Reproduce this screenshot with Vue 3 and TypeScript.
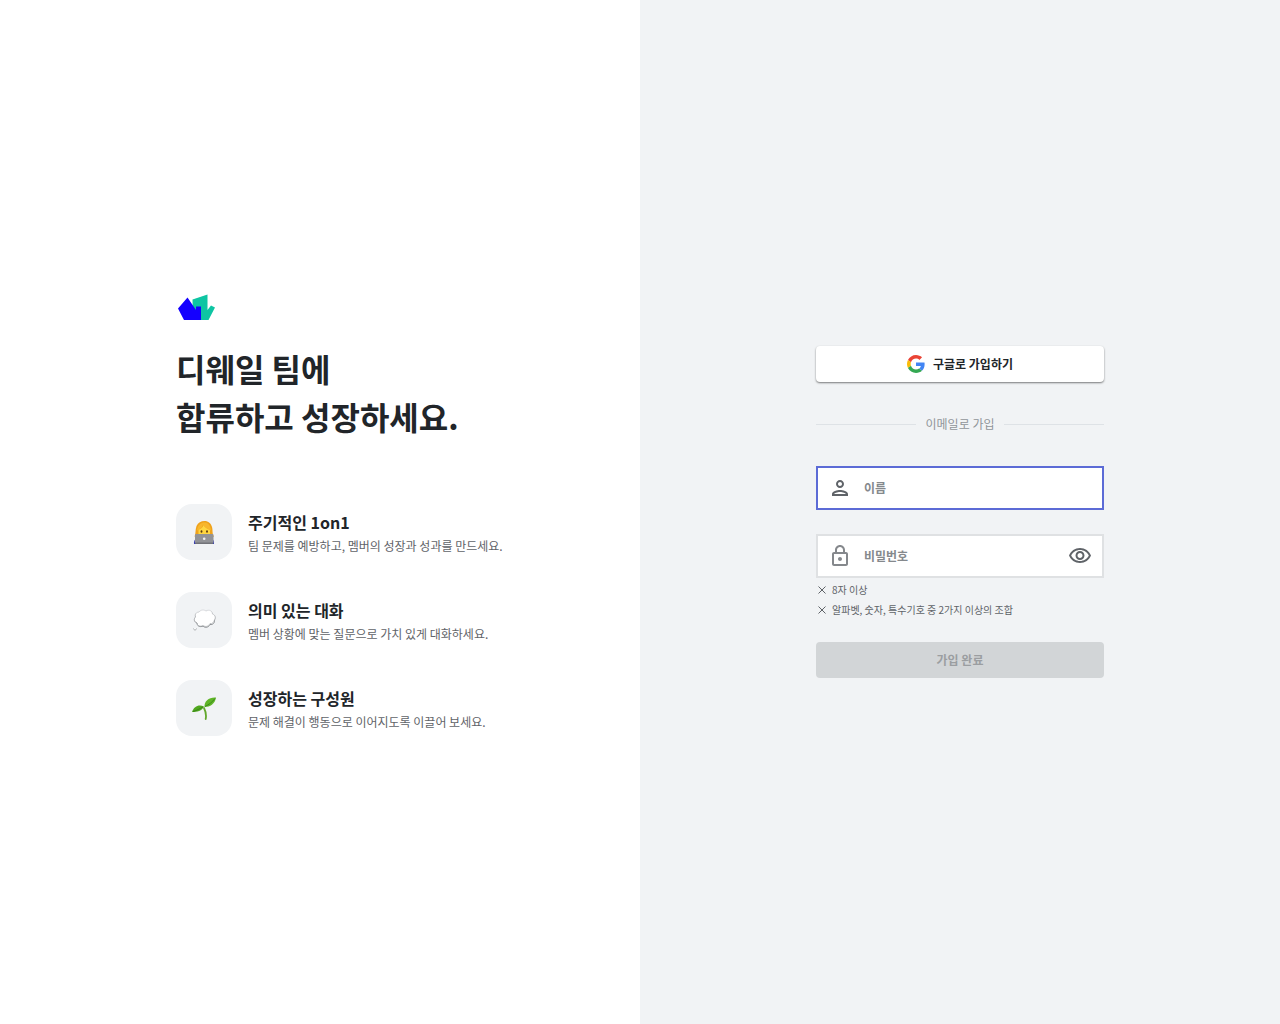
<script setup lang="ts">
import { ref } from 'vue'

interface Feature {
  icon: 'person' | 'thought' | 'sprout'
  title: string
  description: string
}

const features: Feature[] = [
  { icon: 'person', title: '주기적인 1on1', description: '팀 문제를 예방하고, 멤버의 성장과 성과를 만드세요.' },
  { icon: 'thought', title: '의미 있는 대화', description: '멤버 상황에 맞는 질문으로 가치 있게 대화하세요.' },
  { icon: 'sprout', title: '성장하는 구성원', description: '문제 해결이 행동으로 이어지도록 이끌어 보세요.' },
]

const rules: string[] = ['8자 이상', '알파벳, 숫자, 특수기호 중 2가지 이상의 조합']

const name = ref('')
const password = ref('')
const showPassword = ref(false)
</script>

<template>
  <main class="page">
    <section class="intro">
      <div class="column">
        <svg class="logo" viewBox="0 0 40 40" aria-hidden="true">
          <path d="M16.500 11.500 31.500 6.500V22L35 17.500 39 19.500 32.500 32H17Z" fill="#0ec5a3" />
          <path d="M11.500 9.500 20 22V18.500H25V32H8L2 20.500Z" fill="#1400ff" />
        </svg>
        <h1>디웨일 팀에<br />합류하고 성장하세요.</h1>
        <ul class="features">
          <li v-for="feature in features" :key="feature.title">
            <span class="tile">
              <svg v-if="feature.icon === 'person'" viewBox="0 0 24 24" aria-hidden="true">
                <path d="M2 24c-.5-4 2-6 5-6h10c3 0 5.500 2 5 6Z" fill="#3b3fae" />
                <path d="M2.500 16.500C4 14 3 10 4.500 6 6 2.500 9 1 12.500 1c4 0 6.500 2.500 7.500 6 1 3.500 0 7 2 9.500-4 2-15 2-19.500 0Z" fill="#efa21b" />
                <path d="M6.500 9.500C9.500 9 11 7 11.500 5c1.500 2.500 4 4 6.500 4.500V14c-1 3-10.500 3-11.500 0Z" fill="#ffd640" />
                <path d="M5 10.500C8.500 9.500 10.500 7.500 11 4.500c2 3.500 4.500 4.500 8 6C18.500 5 16 2.500 12.500 2.500S5.500 5 5 10.500Z" fill="#f8b62c" />
                <ellipse cx="9.500" cy="11.500" rx=".9" ry="1.200" fill="#5b3c10" />
                <ellipse cx="15" cy="11.500" rx=".9" ry="1.200" fill="#5b3c10" />
                <rect x="3" y="14" width="18.500" height="9.500" rx="1" fill="#929397" />
                <path d="M3.500 22.500h17.500v1.500H3.500Z" fill="#727378" />
                <circle cx="12.200" cy="18.700" r="1.300" fill="#f1f1f2" />
              </svg>
              <svg v-else-if="feature.icon === 'thought'" viewBox="0 0 24 24" aria-hidden="true">
                <defs>
                  <linearGradient id="cloud-edge" x1="0" y1="0" x2="0" y2="1">
                    <stop offset="0" stop-color="#d8dadd" />
                    <stop offset="1" stop-color="#777a7e" />
                  </linearGradient>
                </defs>
                <path d="M7 4C9 1.500 12 1.500 14 3c3-2 6.500 0 6.500 3 3 1 3.500 4 2 6 .5 3-2 5-4.500 4.500-1.500 3-5 3.500-7 1.500-3 1.500-6 0-6-3-3-1-3.500-4-1.500-6C2.500 6 4.500 4 7 4Z" fill="#fff" stroke="url(#cloud-edge)" stroke-width="1" />
                <path d="M5 15.500c1 3 4 3 6 2 2.500 1.800 5.500 1 7-2 2 .5 4-1 4-3" fill="none" stroke="#b4b7ba" stroke-width=".8" />
                <path d="M1.500 20.500c.5 2 2.500 2 3 0" fill="#fff" stroke="#94979b" stroke-width=".8" />
              </svg>
              <svg v-else viewBox="0 0 24 24" aria-hidden="true">
                <path d="M12 12c2 4 2.500 7 1.700 11" fill="none" stroke="#62a82c" stroke-width="1.800" stroke-linecap="round" />
                <path d="M0 16C2 10 7 8 12 10.500 10 15 5 16 0 16Z" fill="#50a71e" />
                <path d="M12.500 11C12 5 17 1 24 1.500 23 8 18 11 12.500 11Z" fill="#5fb527" />
                <path d="M1 15.500c4-1 7-3 10-4.500m2-.5c4-2 7-4 10-8" fill="none" stroke="#347d18" stroke-width=".8" />
              </svg>
            </span>
            <div class="copy">
              <h2>{{ feature.title }}</h2>
              <p>{{ feature.description }}</p>
            </div>
          </li>
        </ul>
      </div>
    </section>

    <section class="signup">
      <form class="column" @submit.prevent>
        <button class="google" type="button">
          <svg viewBox="0 0 48 48" aria-hidden="true">
            <path fill="#ea4335" d="M24 9.500c3.540 0 6.710 1.220 9.210 3.600l6.850-6.850C35.900 2.380 30.470 0 24 0 14.620 0 6.510 5.380 2.560 13.220l7.980 6.190C12.430 13.720 17.740 9.500 24 9.500z" />
            <path fill="#4285f4" d="M46.980 24.550c0-1.570-.15-3.090-.38-4.550H24v9.020h12.940c-.58 2.960-2.260 5.480-4.780 7.180l7.730 6c4.510-4.180 7.090-10.360 7.090-17.650z" />
            <path fill="#fbbc05" d="M10.530 28.590c-.48-1.450-.76-2.990-.76-4.590s.27-3.140.76-4.590l-7.980-6.190C.92 16.460 0 20.120 0 24c0 3.880.92 7.540 2.560 10.780l7.970-6.190z" />
            <path fill="#34a853" d="M24 48c6.480 0 11.930-2.130 15.890-5.810l-7.730-6c-2.150 1.450-4.920 2.300-8.160 2.300-6.260 0-11.570-4.220-13.470-9.910l-7.980 6.190C6.510 42.620 14.620 48 24 48z" />
          </svg>
          <span>구글로 가입하기</span>
        </button>

        <div class="divider"><span>이메일로 가입</span></div>

        <div class="field active">
          <svg viewBox="0 0 24 24" aria-hidden="true">
            <path fill="#5f6368" d="M12 6c1.100 0 2 .9 2 2s-.9 2-2 2-2-.9-2-2 .9-2 2-2m0 10c2.700 0 5.800 1.290 6 2H6c.23-.72 3.310-2 6-2m0-12C9.790 4 8 5.790 8 8s1.790 4 4 4 4-1.790 4-4-1.790-4-4-4zm0 10c-2.670 0-8 1.340-8 4v2h16v-2c0-2.660-5.330-4-8-4z" />
          </svg>
          <input v-model="name" type="text" placeholder="이름" aria-label="이름" autocomplete="name" />
        </div>

        <div class="field">
          <svg viewBox="0 0 24 24" aria-hidden="true">
            <path fill="#85888c" d="M18 8h-1V6c0-2.760-2.240-5-5-5S7 3.240 7 6v2H6c-1.100 0-2 .9-2 2v10c0 1.100.9 2 2 2h12c1.100 0 2-.9 2-2V10c0-1.100-.9-2-2-2zM9 6c0-1.660 1.340-3 3-3s3 1.340 3 3v2H9V6zm9 14H6V10h12v10zm-6-3c1.100 0 2-.9 2-2s-.9-2-2-2-2 .9-2 2 .9 2 2 2z" />
          </svg>
          <input v-model="password" :type="showPassword ? 'text' : 'password'" placeholder="비밀번호" aria-label="비밀번호" autocomplete="new-password" />
          <button class="reveal" type="button" aria-label="비밀번호 표시" @click="showPassword = !showPassword">
            <svg viewBox="0 0 24 24" aria-hidden="true">
              <path fill="#5f6368" d="M12 6c3.790 0 7.170 2.130 8.820 5.500C19.170 14.870 15.790 17 12 17s-7.170-2.130-8.820-5.500C4.830 8.130 8.210 6 12 6m0-2C7 4 2.730 7.110 1 11.500 2.730 15.890 7 19 12 19s9.270-3.110 11-7.500C21.270 7.110 17 4 12 4zm0 5c1.380 0 2.500 1.120 2.500 2.500S13.380 14 12 14s-2.500-1.120-2.500-2.500S10.620 9 12 9m0-2c-2.480 0-4.500 2.020-4.500 4.500S9.520 16 12 16s4.500-2.020 4.500-4.500S14.480 7 12 7z" />
            </svg>
          </button>
        </div>

        <ul class="rules">
          <li v-for="rule in rules" :key="rule">
            <svg viewBox="0 0 12 12" aria-hidden="true"><path d="m2.500 2.500 7 7m0-7-7 7" fill="none" stroke="#5f6368" stroke-width="1" /></svg>
            <span>{{ rule }}</span>
          </li>
        </ul>

        <button class="submit" type="submit" disabled>가입 완료</button>
      </form>
    </section>
  </main>
</template>

<style>
body {
  margin: 0;
  background: #f1f3f5;
}
</style>

<style scoped>
.page {
  display: flex;
  min-height: 100vh;
  color: #212529;
  font-family: "Noto Sans CJK KR", sans-serif;
  font-size: 12px;
  line-height: 20px;
}
.page * {
  box-sizing: border-box;
}
.intro,
.signup {
  flex: 1;
  display: flex;
  align-items: center;
  justify-content: center;
}
.intro {
  background: #fff;
}
.signup {
  background: #f1f3f5;
}
.column {
  width: 288px;
}
.logo {
  display: block;
  width: 40px;
  height: 40px;
}
h1 {
  margin: 16px 0 64px;
  font-size: 32px;
  line-height: 48px;
  font-weight: 700;
  white-space: nowrap;
}
h2,
p,
ul {
  margin: 0;
  padding: 0;
}
li {
  list-style: none;
}
.features {
  display: flex;
  flex-direction: column;
  gap: 32px;
}
.features li {
  display: flex;
  align-items: center;
  gap: 16px;
}
.tile {
  flex: none;
  display: flex;
  align-items: center;
  justify-content: center;
  width: 56px;
  height: 56px;
  border-radius: 16px;
  background: #f1f3f5;
}
.tile svg {
  width: 24px;
  height: 24px;
}
.copy {
  white-space: nowrap;
}
h2 {
  font-size: 16px;
  line-height: 28px;
  font-weight: 700;
}
p {
  color: #5f6368;
}
button {
  padding: 0;
  border: 0;
  font: inherit;
}
.google,
.submit {
  display: flex;
  align-items: center;
  justify-content: center;
  width: 100%;
  height: 36px;
  border-radius: 4px;
  font-weight: 700;
}
.google {
  gap: 8px;
  background: #fff;
  color: #212529;
  box-shadow: 0 1px 2px rgba(0, 0, 0, 0.5);
}
.google svg {
  width: 18px;
  height: 18px;
}
.divider {
  display: flex;
  align-items: center;
  gap: 10px;
  margin: 32px 0;
  color: #909599;
}
.divider::before,
.divider::after {
  content: "";
  flex: 1;
  height: 1px;
  background: #dee2e6;
}
.field {
  display: flex;
  align-items: center;
  height: 44px;
  padding: 0 10px;
  border: 2px solid #dfe1e3;
  background: #fff;
}
.field.active {
  margin-bottom: 24px;
  border-color: #5c6bd6;
}
.field svg {
  flex: none;
  display: block;
  width: 24px;
  height: 24px;
}
.field input {
  flex: 1;
  min-width: 0;
  height: 38px;
  margin-bottom: 2px;
  padding: 0 12px;
  border: 0;
  outline: 0;
  background: none;
  color: inherit;
  font: inherit;
  font-weight: 700;
}
.field input::placeholder {
  color: #85898d;
  opacity: 1;
}
.reveal {
  background: none;
}
.rules {
  margin: 2px 0 22px;
  color: #5f6368;
  font-size: 10px;
}
.rules li {
  display: flex;
  align-items: center;
  gap: 4px;
}
.rules svg {
  width: 12px;
  height: 12px;
}
.submit {
  background: #d2d5d7;
  color: #9b9ea1;
}
</style>
